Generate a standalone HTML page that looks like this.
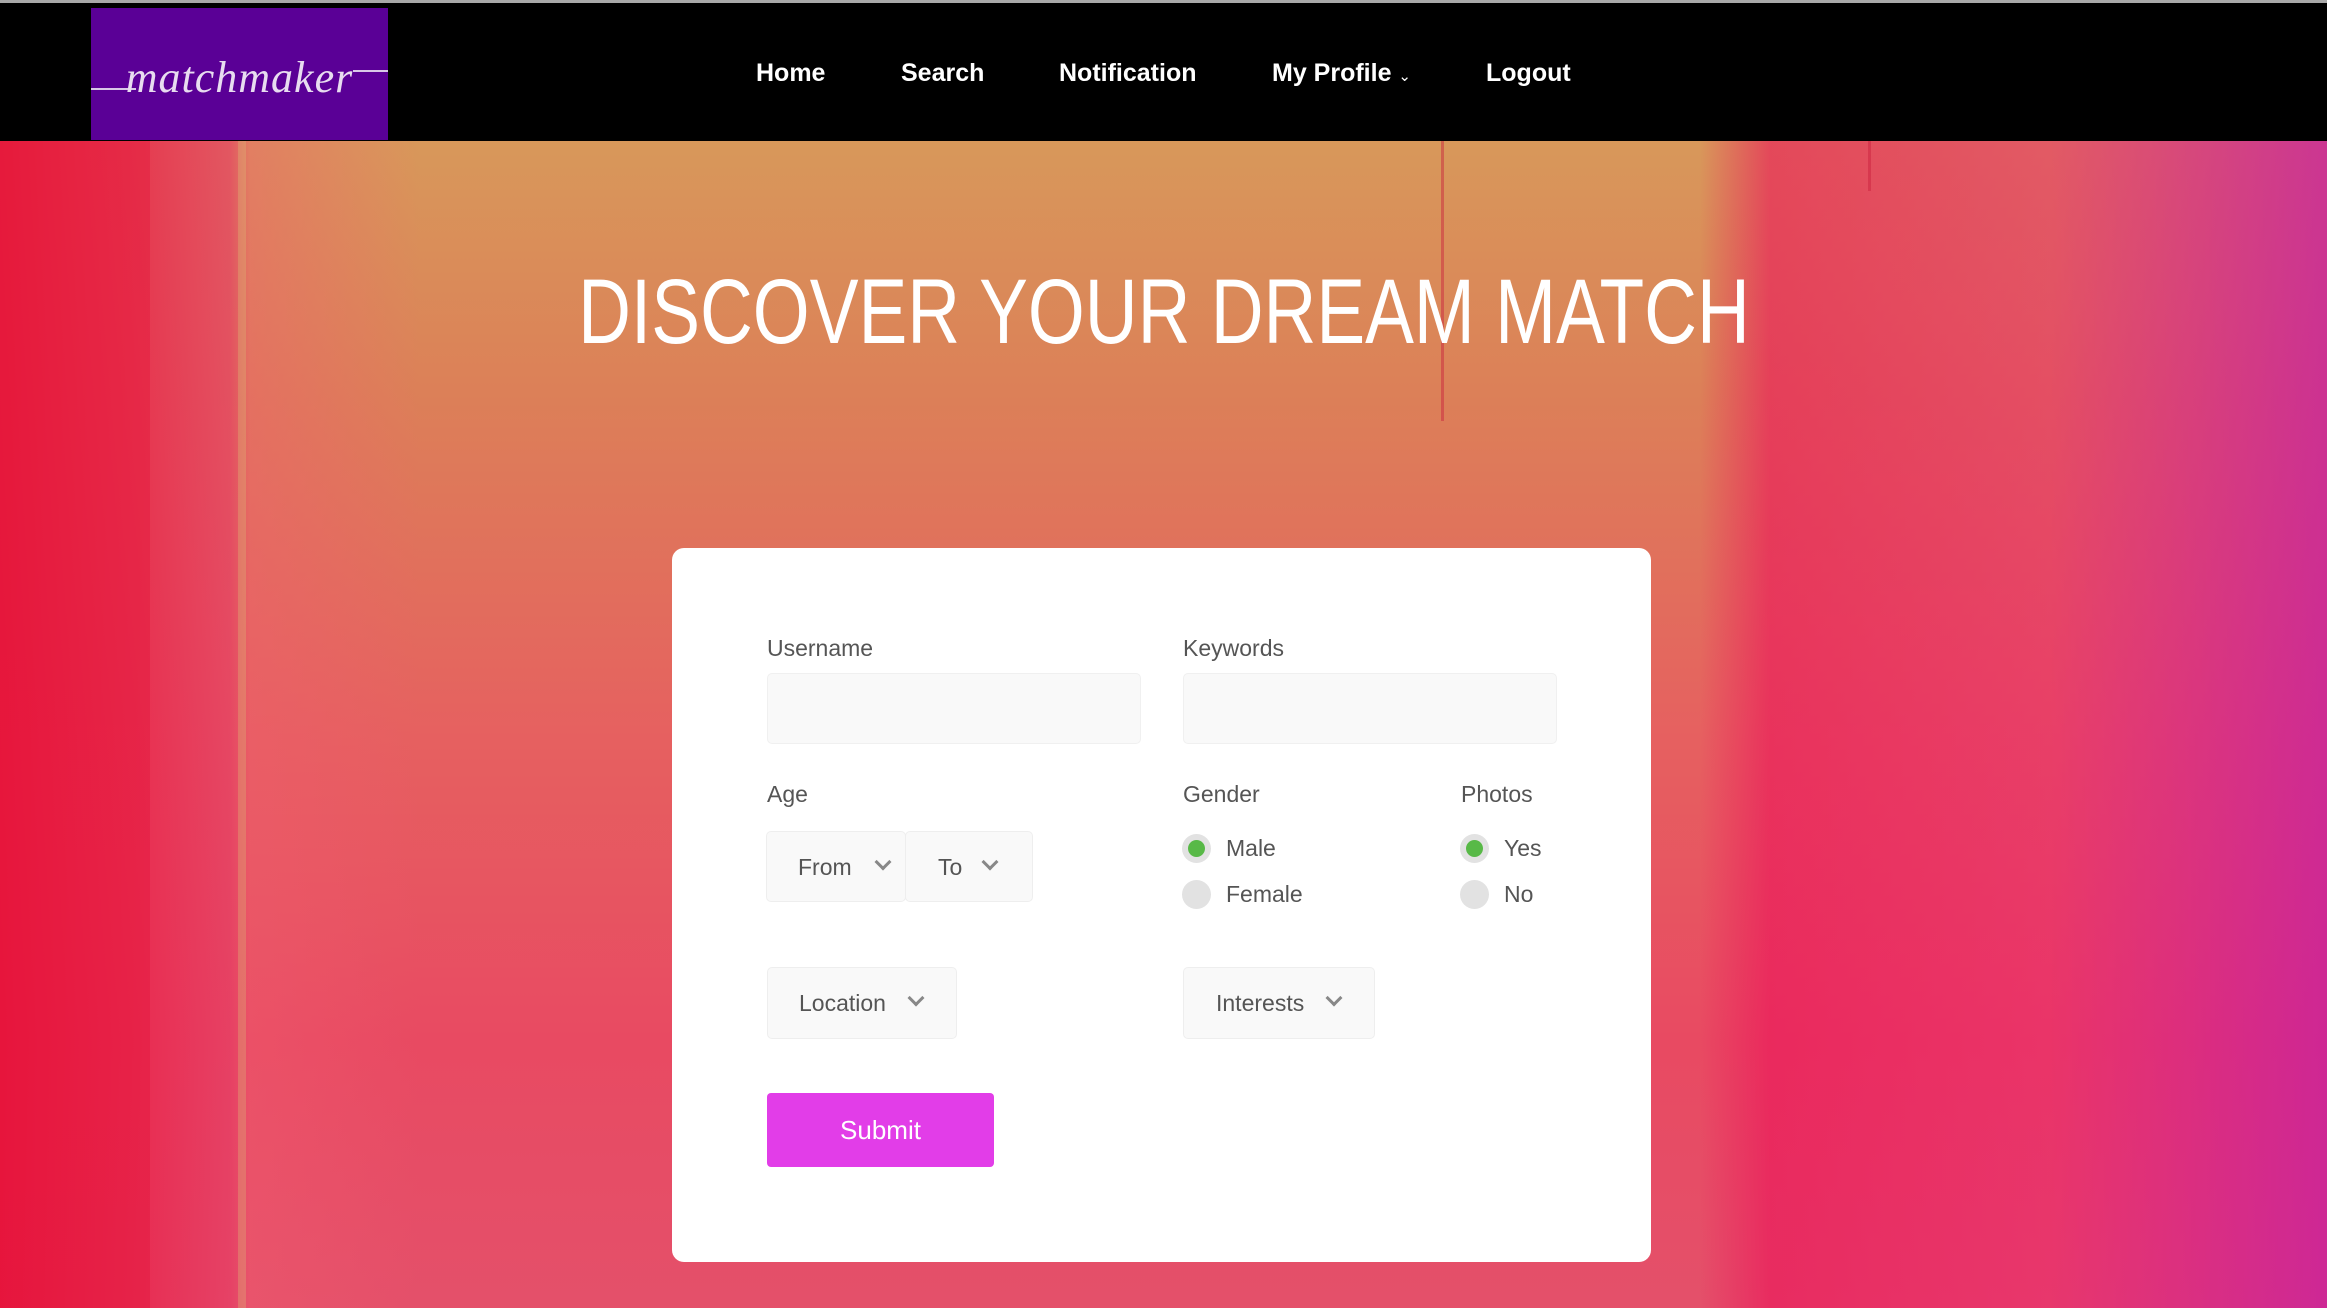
<!DOCTYPE html>
<html><head><meta charset="utf-8"><style>
*{margin:0;padding:0;box-sizing:border-box}
html,body{width:2327px;height:1308px;overflow:hidden;font-family:"Liberation Sans",Arial,sans-serif}
body{position:relative;background:#e8405a}
.bg{position:absolute;left:0;top:141px;width:2327px;height:1167px;
background:
linear-gradient(90deg,rgba(232,20,60,.9) 0px,rgba(232,40,80,.8) 150px,rgba(230,60,100,.7) 230px,rgba(240,90,110,.4) 250px,rgba(0,0,0,0) 420px,rgba(0,0,0,0) 1700px,rgba(235,20,90,.6) 1770px,rgba(235,30,110,.5) 2050px,rgba(200,30,160,.8) 2327px),
linear-gradient(180deg,#d8985a 0px,#dc8058 250px,#e66060 600px,#e84a62 900px,#e4506a 1167px);}
.str{position:absolute;top:141px;height:1167px}
.hdr{position:absolute;left:0;top:0;width:2327px;height:141px;background:#000;border-top:3px solid #a8a8a8}
.logo{position:absolute;left:91px;top:5px;width:297px;height:132px;background:#5a0096;overflow:hidden}
.logo span{position:absolute;left:0;right:0;top:44px;text-align:center;font-family:"Liberation Serif",serif;font-style:italic;color:#e8dcf0;font-size:44px;letter-spacing:1px}
.logo i{position:absolute;height:2px;background:#d8c8e8;top:78px}
.nav a{position:absolute;top:56px;color:#fff;font-weight:bold;font-size:25px;text-decoration:none;white-space:nowrap}
h1{position:absolute;left:0;width:2327px;top:262px;text-align:center;color:#fff;font-weight:normal;font-size:92px;line-height:100px}
h1 span{display:inline-block;transform:scaleX(.795);white-space:nowrap}
.card{position:absolute;left:672px;top:548px;width:979px;height:714px;background:#fff;border-radius:12px}
.lbl{position:absolute;color:#555;font-size:23px}
.inp{position:absolute;background:#f9f9f9;border:1px solid #f0f0f0;border-radius:5px}
.sel{position:absolute;background:#f9f9f9;border:1px solid #eee;border-radius:5px;color:#555;font-size:23px;line-height:70px}
.chev{position:absolute;width:12px;height:12px;border-right:3px solid #888;border-bottom:3px solid #888;transform:rotate(45deg)}
.rad{position:absolute;width:29px;height:29px;border-radius:50%;background:#e2e2e2}
.rad.on::after{content:"";position:absolute;left:6px;top:6px;width:17px;height:17px;border-radius:50%;background:#58b947}
.btn{position:absolute;left:767px;top:1093px;width:227px;height:74px;background:#e23de8;border-radius:4px;color:#fff;font-size:26px;text-align:center;line-height:74px}
</style></head><body>
<div class="bg"></div>
<div class="str" style="left:0;width:150px;background:rgba(230,15,55,.35)"></div>
<div class="str" style="left:238px;width:8px;background:rgba(220,200,120,.3)"></div>
<div class="str" style="left:1441px;width:3px;height:280px;background:rgba(200,30,60,.45)"></div>
<div class="str" style="left:1868px;width:3px;height:50px;background:rgba(200,30,60,.45)"></div>
<div class="hdr">
<div class="logo"><i style="left:0;width:45px;top:80px"></i><span>matchmaker</span><i style="right:0;width:35px;top:62px"></i></div>
<div class="nav">
<a style="left:756px">Home</a>
<a style="left:901px">Search</a>
<a style="left:1059px">Notification</a>
<a style="left:1272px">My Profile <span style="font-size:15px;font-weight:normal">&#8964;</span></a>
<a style="left:1486px">Logout</a>
</div></div>
<h1><span>DISCOVER YOUR DREAM MATCH</span></h1>
<div class="card"></div>
<div class="lbl" style="left:767px;top:635px">Username</div>
<div class="lbl" style="left:1183px;top:635px">Keywords</div>
<div class="inp" style="left:767px;top:673px;width:374px;height:71px"></div>
<div class="inp" style="left:1183px;top:673px;width:374px;height:71px"></div>
<div class="lbl" style="left:767px;top:781px">Age</div>
<div class="lbl" style="left:1183px;top:781px">Gender</div>
<div class="lbl" style="left:1461px;top:781px">Photos</div>
<div class="sel" style="left:766px;top:831px;width:140px;height:71px"><span style="position:absolute;left:31px">From</span><i class="chev" style="left:110px;top:24px"></i></div>
<div class="sel" style="left:905px;top:831px;width:128px;height:71px"><span style="position:absolute;left:32px">To</span><i class="chev" style="left:78px;top:24px"></i></div>
<div class="rad on" style="left:1182px;top:834px"></div><div class="lbl" style="left:1226px;top:835px">Male</div>
<div class="rad" style="left:1182px;top:880px"></div><div class="lbl" style="left:1226px;top:881px">Female</div>
<div class="rad on" style="left:1460px;top:834px"></div><div class="lbl" style="left:1504px;top:835px">Yes</div>
<div class="rad" style="left:1460px;top:880px"></div><div class="lbl" style="left:1504px;top:881px">No</div>
<div class="sel" style="left:767px;top:967px;width:190px;height:72px"><span style="position:absolute;left:31px">Location</span><i class="chev" style="left:142px;top:24px"></i></div>
<div class="sel" style="left:1183px;top:967px;width:192px;height:72px"><span style="position:absolute;left:32px">Interests</span><i class="chev" style="left:144px;top:24px"></i></div>
<div class="btn">Submit</div>
</body></html>
